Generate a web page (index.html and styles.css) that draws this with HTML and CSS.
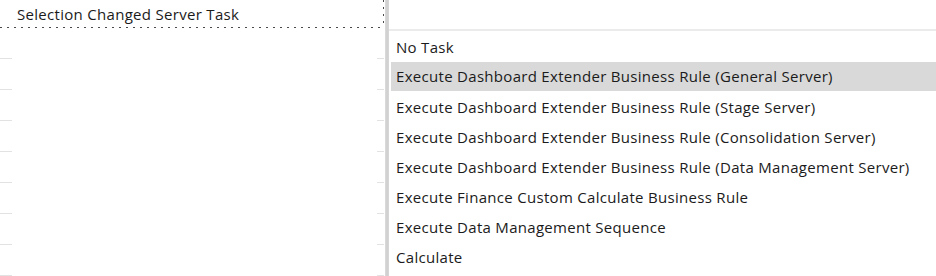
FILE: index.html
```html
<!DOCTYPE html>
<html>
<head>
<meta charset="utf-8">
<link rel="stylesheet" href="styles.css">
</head>
<body>
<div class="page">
  <div class="left">
    <div class="head-cell"><span class="head-text">Selection Changed Server Task</span></div>
    <div class="grid-row"></div>
    <div class="grid-row"></div>
    <div class="grid-row"></div>
    <div class="grid-row"></div>
    <div class="grid-row"></div>
    <div class="grid-row"></div>
    <div class="grid-row"></div>
    <div class="grid-row"></div>
  </div>
  <div class="splitter"></div>
  <div class="right">
    <div class="editor"></div>
    <div class="editor-bar"></div>
    <ul class="list">
      <li class="item">No Task</li>
      <li class="item selected">Execute Dashboard Extender Business Rule (General Server)</li>
      <li class="item">Execute Dashboard Extender Business Rule (Stage Server)</li>
      <li class="item">Execute Dashboard Extender Business Rule (Consolidation Server)</li>
      <li class="item">Execute Dashboard Extender Business Rule (Data Management Server)</li>
      <li class="item">Execute Finance Custom Calculate Business Rule</li>
      <li class="item">Execute Data Management Sequence</li>
      <li class="item">Calculate</li>
    </ul>
  </div>
</div>
</body>
</html>
```
FILE: styles.css
```css
html, body {
  margin: 0;
  padding: 0;
  background: #ffffff;
}
body {
  font-family: "Open Sans", "Noto Sans", sans-serif;
  font-size: 15px;
  letter-spacing: 0.3px;
  color: #1b1b1b;
  overflow: hidden;
}
.page {
  display: flex;
  width: 936px;
  height: 276px;
}
.left {
  width: 385px;
  flex: none;
  display: flex;
  flex-direction: column;
}
.head-cell {
  height: 28px;
  flex: none;
  display: flex;
  align-items: center;
  padding-left: 17px;
  padding-bottom: 1px;
  box-sizing: border-box;
  margin-right: 1px;
  background:
    repeating-linear-gradient(to right, #4a4a4a 0 2px, transparent 2px 7px) left bottom / 100% 1px no-repeat,
    repeating-linear-gradient(to bottom, #4a4a4a 0 2px, transparent 2px 7px) right top / 1px 100% no-repeat;
}
.head-text {
  line-height: 20px;
}
.grid-row {
  height: 31px;
  flex: none;
  background:
    linear-gradient(#e2e2e2, #e2e2e2) left bottom / 12px 1px no-repeat,
    linear-gradient(#e2e2e2, #e2e2e2) right 1px bottom / 7px 1px no-repeat;
}
.splitter {
  width: 4px;
  flex: none;
  background: linear-gradient(to right, #dcdcdc, #cfcfcf 50%, #d8d8d8);
}
.right {
  flex: 1;
  display: flex;
  flex-direction: column;
}
.editor {
  height: 29px;
  flex: none;
}
.editor-bar {
  height: 2px;
  background: #ebebeb;
  flex: none;
}
.list {
  list-style: none;
  margin: 1px 0 0 2px;
  padding: 0;
}
.item {
  height: 30px;
  line-height: 30px;
  padding-left: 5px;
  white-space: nowrap;
}
.item.selected {
  background: #d9d9d9;
  height: 29px;
  line-height: 29px;
  margin-bottom: 1px;
}
```
